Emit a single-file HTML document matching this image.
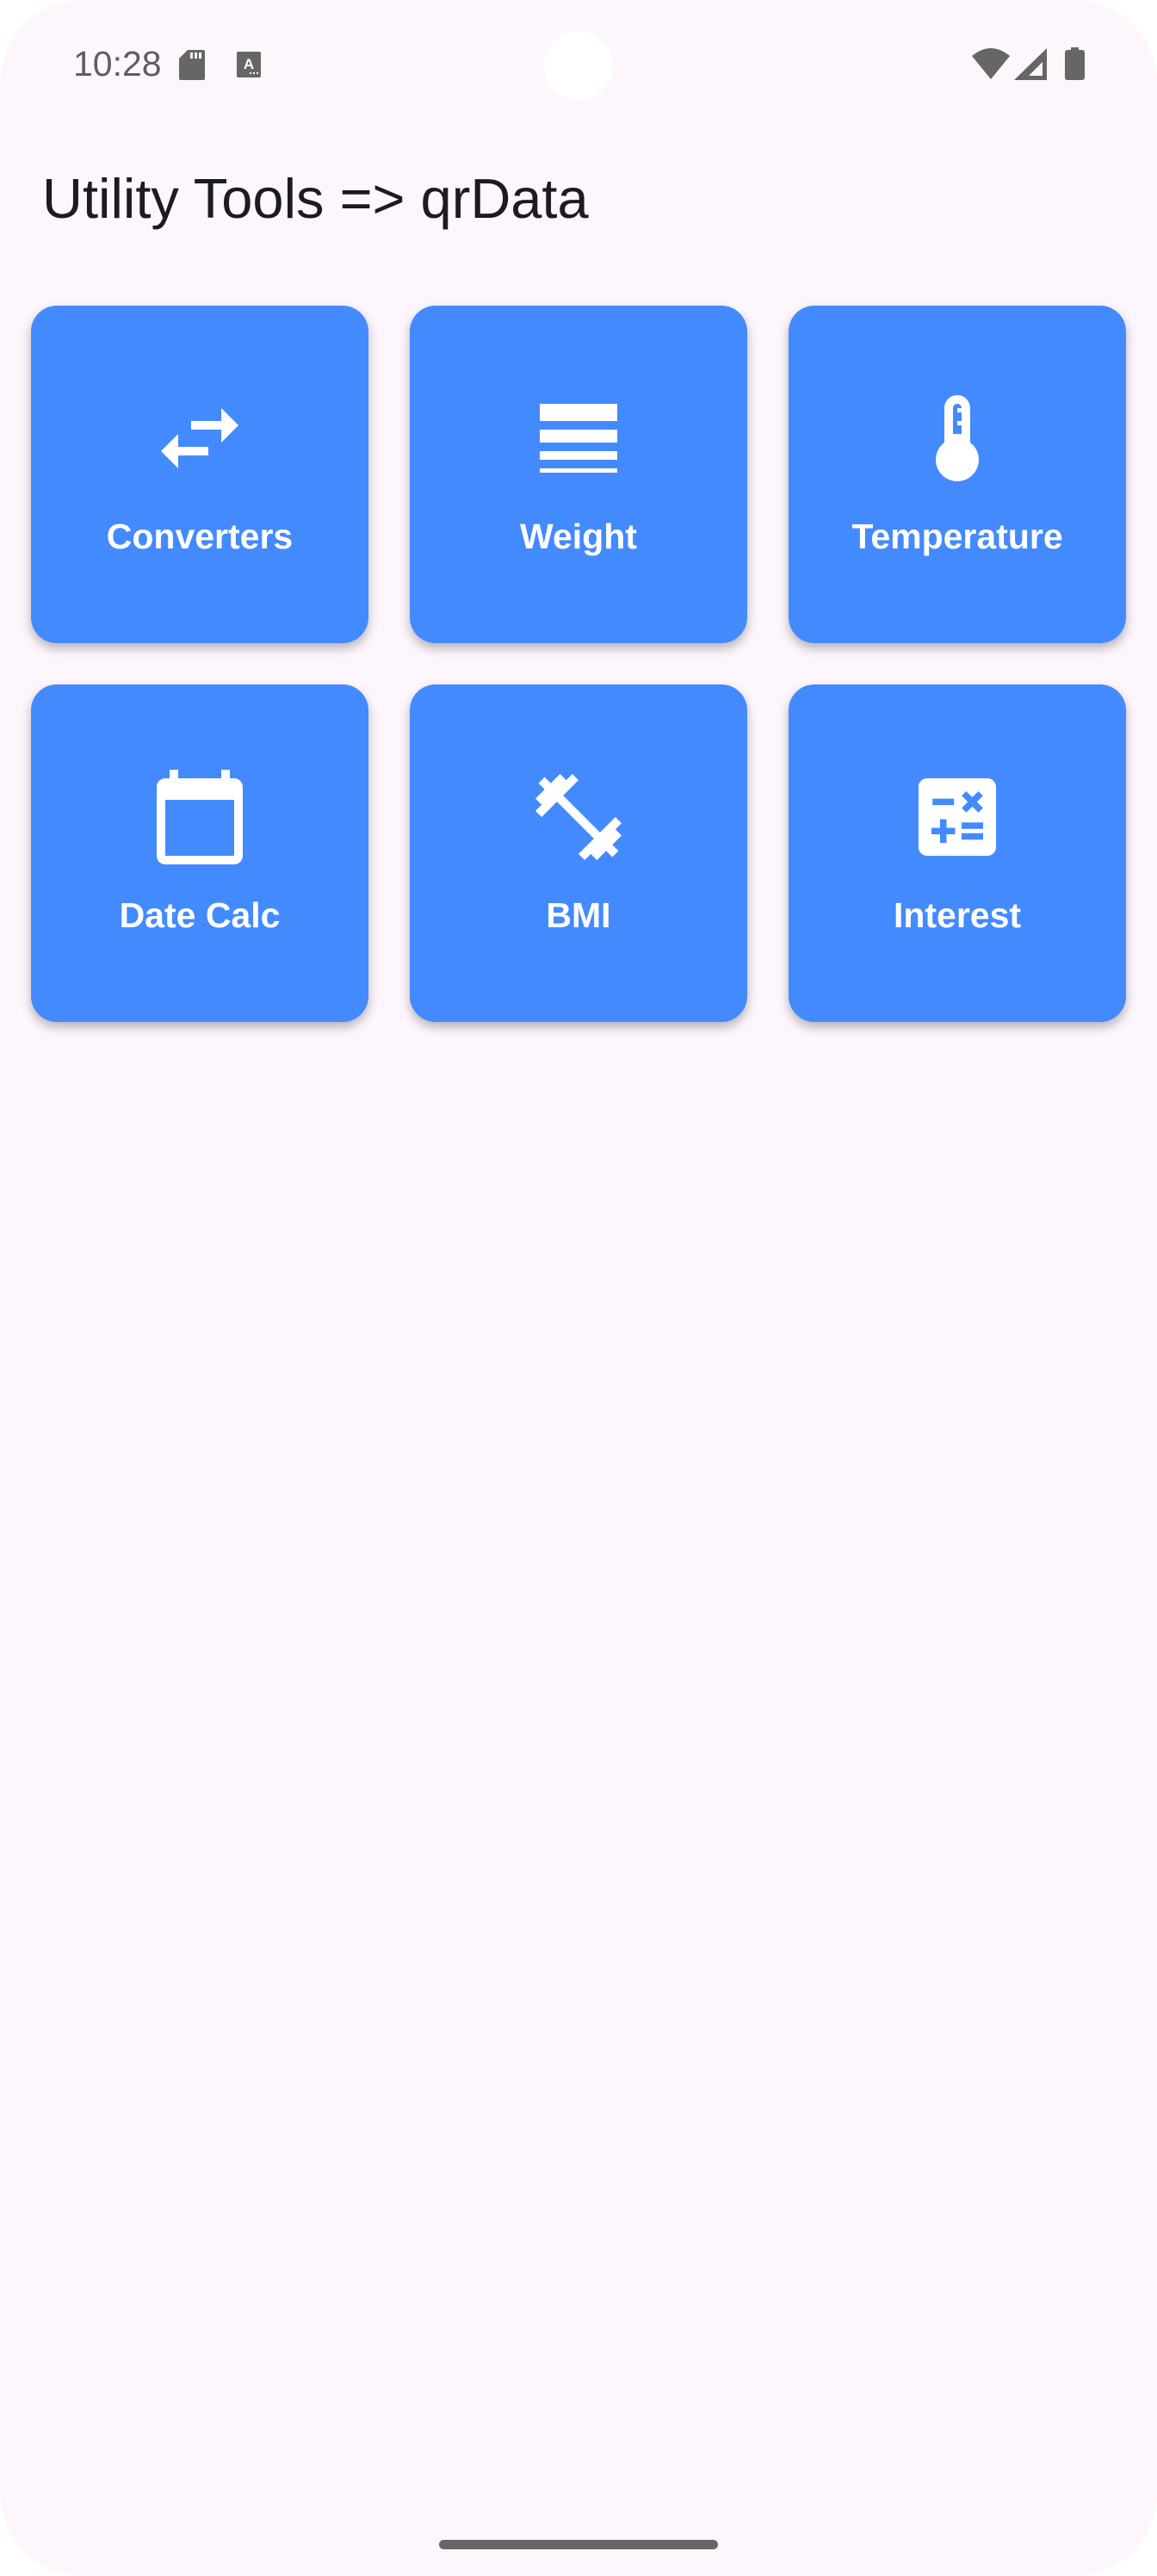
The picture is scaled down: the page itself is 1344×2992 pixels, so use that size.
<!DOCTYPE html>
<html><head><meta charset="utf-8">
<style>
html,body{margin:0;padding:0;background:#fff;}
.screen{position:relative;width:1344px;height:2992px;background:#fdf6fc;border-radius:96px;overflow:hidden;font-family:"Liberation Sans",sans-serif;}
.time{position:absolute;left:85px;top:51px;font-size:41px;color:#5e5e62;letter-spacing:0px;}
.cam{position:absolute;left:632px;top:36px;width:80px;height:80px;border-radius:50%;background:#fff;}
.title{position:absolute;left:49px;top:193px;font-size:65px;color:#1c1b1f;white-space:nowrap;}
.card{position:absolute;width:392px;height:392px;background:#448aff;border-radius:30px;box-shadow:0 6px 12px rgba(0,0,0,0.28);}
.card svg{position:absolute;left:136px;top:94px;width:120px;height:120px;}
.card .lbl{position:absolute;left:0;right:0;top:245px;text-align:center;color:#fff;font-weight:bold;font-size:41px;}
.pill{position:absolute;left:510px;top:2950px;width:324px;height:11px;border-radius:6px;background:#666;}
</style></head><body>
<div class="screen">
<div class="time">10:28</div>
<svg style="position:absolute;left:208px;top:58px" width="30" height="35" viewBox="0 0 30 35"><path d="M10 0H28a2 2 0 0 1 2 2V33a2 2 0 0 1-2 2H2a2 2 0 0 1-2-2V10z" fill="#666"/><rect x="13" y="3" width="3" height="7" fill="#fdf6fc"/><rect x="18" y="3" width="3" height="7" fill="#fdf6fc"/><rect x="23" y="3" width="3" height="7" fill="#fdf6fc"/></svg>
<svg style="position:absolute;left:275px;top:60px" width="28" height="30" viewBox="0 0 28 30"><rect width="28" height="30" rx="2" fill="#666"/><text x="14" y="20" text-anchor="middle" font-family="Liberation Sans" font-weight="bold" font-size="17" fill="#fff">A</text><rect x="15" y="24" width="2" height="2" fill="#fff"/><rect x="19" y="24" width="2" height="2" fill="#fff"/><rect x="23" y="24" width="2" height="2" fill="#fff"/></svg>
<div class="cam"></div>
<svg style="position:absolute;left:1129px;top:55px" width="44" height="37" viewBox="0 0 44 37"><path d="M0 10Q22-8 44 10L22 37z" fill="#666"/></svg>
<svg style="position:absolute;left:1178px;top:56px" width="38" height="37" viewBox="0 0 38 37"><path d="M38 0V37H0z" fill="#666"/><path d="M33 16V32H17z" fill="#fdf6fc"/></svg>
<svg style="position:absolute;left:1237px;top:55px" width="23" height="38" viewBox="0 0 23 38"><rect x="7" y="0" width="9" height="4" fill="#666"/><rect x="0" y="3" width="23" height="35" rx="3" fill="#666"/></svg>
<div class="title">Utility Tools =&gt; qrData</div>

<div class="card" style="left:36px;top:355px"><svg viewBox="0 0 24 24"><path fill="#fff" d="M6.99 11L3 15l3.99 4v-3H14v-2H6.99v-3zM21 9l-3.99-4v3H10v2h7.01v3L21 9z"/></svg><div class="lbl">Converters</div></div>
<div class="card" style="left:476px;top:355px"><svg viewBox="0 0 24 24"><path fill="#fff" d="M3 17h18v-2H3v2zm0 3h18v-1H3v1zm0-7h18v-3H3v3zm0-9v4h18V4H3z"/></svg><div class="lbl">Weight</div></div>
<div class="card" style="left:916px;top:355px"><svg viewBox="0 0 24 24"><path fill="#fff" d="M15 13V5c0-1.66-1.340-3-3-3S9 3.34 9 5v8c-1.21.91-2 2.37-2 4 0 2.76 2.24 5 5 5s5-2.24 5-5c0-1.63-.79-3.09-2-4zm-4-8c0-.55.45-1 1-1s1 .45 1 1h-1v1h1v2h-1v1h1v2h-2V5z"/></svg><div class="lbl">Temperature</div></div>
<div class="card" style="left:36px;top:795px"><svg viewBox="0 0 24 24"><path fill="#fff" d="M20 3h-1V1h-2v2H7V1H5v2H4c-1.1 0-2 .9-2 2v16c0 1.1.9 2 2 2h16c1.1 0 2-.9 2-2V5c0-1.1-.9-2-2-2zm0 18H4V8h16v13z"/></svg><div class="lbl">Date Calc</div></div>
<div class="card" style="left:476px;top:795px"><svg viewBox="0 0 24 24"><path fill="#fff" d="M20.57 14.86L22 13.43 20.57 12 17 15.57 8.43 7 12 3.43 10.57 2 9.14 3.43 7.71 2 5.57 4.14 4.14 2.71 2.71 4.14l1.43 1.43L2 7.71l1.43 1.43L2 10.57 3.43 12 7 8.43 15.57 17 12 20.57 13.43 22l1.43-1.43L16.29 22l2.14-2.14 1.43 1.43 1.43-1.43-1.43-1.43L22 16.29z"/></svg><div class="lbl">BMI</div></div>
<div class="card" style="left:916px;top:795px"><svg viewBox="0 0 24 24"><path fill="#fff" d="M19 3H5c-1.1 0-2 .9-2 2v14c0 1.1.9 2 2 2h14c1.1 0 2-.9 2-2V5c0-1.1-.9-2-2-2zm-5.970 4.06L14.09 6l1.41 1.41L16.91 6l1.06 1.06-1.41 1.41 1.41 1.41-1.06 1.06-1.41-1.4-1.41 1.41-1.06-1.06 1.41-1.41-1.41-1.42zm-6.78.66h5v1.5h-5v-1.5zM11.5 16h-2v2H8v-2H6v-1.5h2v-2h1.5v2h2V16zm6.5 1.25h-5v-1.5h5v1.5zm0-2.5h-5v-1.5h5v1.5z"/></svg><div class="lbl">Interest</div></div>

<div class="pill"></div>
</div>
</body></html>
